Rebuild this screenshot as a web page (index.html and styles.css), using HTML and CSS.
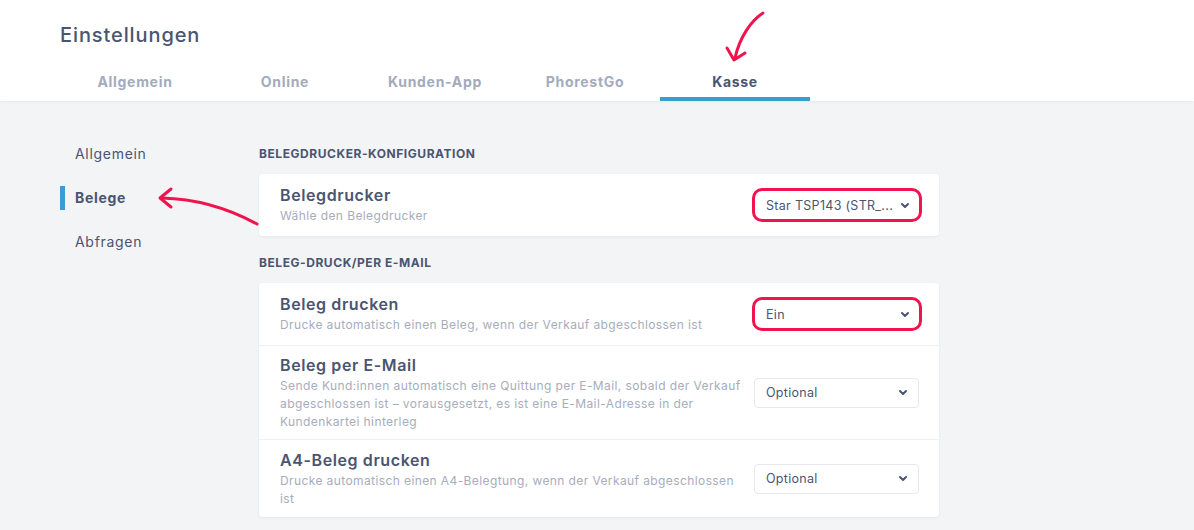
FILE: index.html
```html
<!DOCTYPE html>
<html lang="de">
<head>
<meta charset="utf-8">
<title>Einstellungen</title>
<link rel="stylesheet" href="styles.css">
</head>
<body>
<header class="header">
  <h1 class="page-title">Einstellungen</h1>
  <nav class="tabs">
    <a class="tab">Allgemein</a>
    <a class="tab">Online</a>
    <a class="tab">Kunden-App</a>
    <a class="tab">PhorestGo</a>
    <a class="tab tab-active">Kasse</a>
  </nav>
  <svg class="arrow arrow-top" width="50" height="60" viewBox="0 0 50 60"><path d="M41 5 C30 12 18 28 13 50" fill="none" stroke="#f0134d" stroke-width="3" stroke-linecap="round"/><path d="M5 40 L12 52 L23 45" fill="none" stroke="#f0134d" stroke-width="3" stroke-linecap="round" stroke-linejoin="round"/></svg>
</header>
<div class="body">
  <aside class="sidenav">
    <a class="side-item">Allgemein</a>
    <a class="side-item side-active">Belege</a>
    <a class="side-item">Abfragen</a>
  </aside>
  <main class="content">
    <h2 class="section-title">BELEGDRUCKER-KONFIGURATION</h2>
    <section class="card">
      <div class="row row-first">
        <div class="row-text">
          <div class="row-title">Belegdrucker</div>
          <div class="row-desc">Wähle den Belegdrucker</div>
        </div>
        <div class="select select-hl"><span>Star TSP143 (STR_...</span><svg class="chev" width="10" height="7" viewBox="0 0 10 7"><path d="M2 2 L5 5 L8 2" fill="none" stroke="#4a5570" stroke-width="2" stroke-linecap="round" stroke-linejoin="round"/></svg></div>
      </div>
    </section>
    <h2 class="section-title section-title-2">BELEG-DRUCK/PER E-MAIL</h2>
    <section class="card">
      <div class="row row-first">
        <div class="row-text">
          <div class="row-title">Beleg drucken</div>
          <div class="row-desc">Drucke automatisch einen Beleg, wenn der Verkauf abgeschlossen ist</div>
        </div>
        <div class="select select-hl"><span>Ein</span><svg class="chev" width="10" height="7" viewBox="0 0 10 7"><path d="M2 2 L5 5 L8 2" fill="none" stroke="#4a5570" stroke-width="2" stroke-linecap="round" stroke-linejoin="round"/></svg></div>
      </div>
      <div class="row row-mail">
        <div class="row-text">
          <div class="row-title">Beleg per E-Mail</div>
          <div class="row-desc">Sende Kund:innen automatisch eine Quittung per E-Mail, sobald der Verkauf abgeschlossen ist – vorausgesetzt, es ist eine E-Mail-Adresse in der Kundenkartei hinterleg</div>
        </div>
        <div class="select"><span>Optional</span><svg class="chev" width="10" height="7" viewBox="0 0 10 7"><path d="M2 2 L5 5 L8 2" fill="none" stroke="#4a5570" stroke-width="2" stroke-linecap="round" stroke-linejoin="round"/></svg></div>
      </div>
      <div class="row row-a4">
        <div class="row-text">
          <div class="row-title">A4-Beleg drucken</div>
          <div class="row-desc">Drucke automatisch einen A4-Belegtung, wenn der Verkauf abgeschlossen ist</div>
        </div>
        <div class="select"><span>Optional</span><svg class="chev" width="10" height="7" viewBox="0 0 10 7"><path d="M2 2 L5 5 L8 2" fill="none" stroke="#4a5570" stroke-width="2" stroke-linecap="round" stroke-linejoin="round"/></svg></div>
      </div>
    </section>
  </main>
  <svg class="arrow arrow-side" width="110" height="44" viewBox="0 0 110 44"><path d="M102 38 C80 26 50 13 7 12" fill="none" stroke="#f0134d" stroke-width="3" stroke-linecap="round"/><path d="M16 3 L5 12 L16 21" fill="none" stroke="#f0134d" stroke-width="3" stroke-linecap="round" stroke-linejoin="round"/></svg>
</div>
</body>
</html>
```
FILE: styles.css
```css
* { box-sizing: border-box; }
html, body { margin: 0; padding: 0; }
body {
  font-family: "Inter", "Liberation Sans", sans-serif;
  background: #f3f4f6;
  color: #4a5570;
  width: 1194px;
  height: 530px;
  overflow: hidden;
}
.header {
  position: relative;
  background: #fff;
  height: 101px;
  padding: 22px 0 0 60px;
  box-shadow: 0 1px 3px rgba(0,0,0,0.05);
}
.page-title {
  margin: 0;
  font-size: 20px;
  font-weight: 500;
  color: #4a5570;
  line-height: 26px;
  letter-spacing: 0.9px;
}
.tabs {
  display: flex;
  margin-top: 20px;
}
.tab {
  width: 150px;
  height: 33px;
  text-align: center;
  font-size: 14px;
  font-weight: 700;
  color: #a3abbc;
  line-height: 20px;
  padding-top: 4px;
  letter-spacing: 0.7px;
  border-bottom: 4px solid transparent;
}
.tab-active {
  color: #4a5570;
  border-bottom-color: #3b9bd3;
}
.arrow { position: absolute; }
.arrow-top { left: 722px; top: 8px; }
.body {
  position: relative;
  display: flex;
  padding: 0 0 0 60px;
}
.sidenav {
  width: 199px;
  padding-top: 43px;
  display: flex;
  flex-direction: column;
  gap: 24px;
}
.side-item {
  font-size: 14px;
  line-height: 20px;
  color: #4a5570;
  padding-left: 10px;
  letter-spacing: 0.7px;
  border-left: 5px solid transparent;
}
.side-active {
  font-weight: 700;
  border-left-color: #3b9bd3;
  line-height: 24px;
  margin: -2px 0;
}
.content {
  width: 680px;
  padding-top: 45px;
}
.section-title {
  margin: 0 0 12px;
  font-size: 12px;
  font-weight: 700;
  line-height: 16px;
  color: #4a5570;
  letter-spacing: 0.55px;
}
.section-title-2 { margin-top: 19px; }
.card {
  background: #fff;
  border-radius: 4px;
  box-shadow: 0 1px 3px rgba(30,40,60,0.06);
}
.row {
  display: flex;
  align-items: center;
  justify-content: space-between;
  padding: 0 20px 0 21px;
  border-top: 1px solid #eef0f3;
}
.row-first { border-top: none; height: 62px; }
.row-mail { height: 94px; }
.row-a4 { height: 78px; }
.row-text { width: 464px; }
.row-title {
  font-size: 16px;
  font-weight: 600;
  line-height: 20px;
  color: #4a5570;
  letter-spacing: 0.6px;
}
.row-desc {
  font-size: 12px;
  line-height: 18px;
  color: #a6adbd;
  margin-top: 2px;
  letter-spacing: 0.4px;
}
.select {
  position: relative;
  width: 165px;
  height: 30px;
  border: 1px solid #e6e9ee;
  border-radius: 4px;
  display: flex;
  align-items: center;
  justify-content: space-between;
  padding: 0 10px 0 11px;
  font-size: 12.5px;
  letter-spacing: 0.3px;
  color: #4a5570;
}
.select-hl {
  border: 3px solid #f0134d;
  border-radius: 10px;
  width: 170px;
  height: 34px;
  margin-right: -3px;
  padding: 0 9px 0 11px;
}
.chev { display: block; }
.arrow-side { left: 155px; top: 85px; }
```
